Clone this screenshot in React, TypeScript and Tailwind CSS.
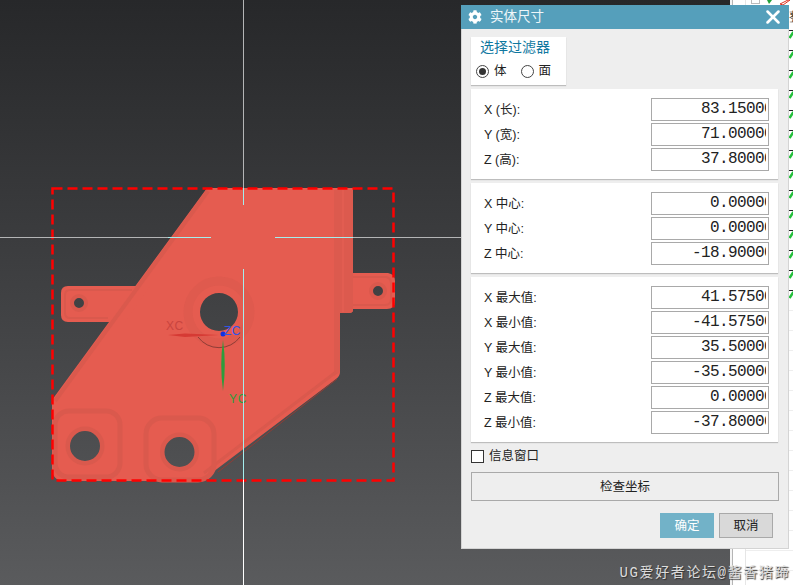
import React from 'react';
import { FaCog } from 'react-icons/fa';
import { X } from 'lucide-react';

const cjk = '"Liberation Sans", "Noto Sans CJK SC", sans-serif';

const hole = (cx: number, cy: number, r: number) =>
  `M${cx - r} ${cy}a${r} ${r} 0 1 0 ${r * 2} 0a${r} ${r} 0 1 0 ${-r * 2} 0Z`;

const outline =
  'M207 188L353 188L353 273L388 273Q395 274 395 281L395 301Q395 309 387 309L353 309L353 310Q353 313 349 313L340 313L340 372Q340 376 336 379L205 478Q203 480 198 481L65 481Q52 481 52 468L52 400Z';
const tab = 'M150 286L68 286Q61 286 61 293L61 315Q61 322 68 322L125 322Z';

const holes = [
  hole(219, 312, 19),
  hole(79, 303, 5),
  hole(378, 291, 5),
  hole(85, 446, 15),
  hole(179.5, 452, 15),
].join('');

const Viewport = () => (
  <svg width="730" height="585" viewBox="0 0 730 585" className="block">
    <defs>
      <mask id="part-holes">
        <rect width="730" height="585" fill="white" />
        <path d={holes} fill="black" />
      </mask>
    </defs>
    <g mask="url(#part-holes)">
      <path d={outline} fill="#e55c50" />
      <path d={tab} fill="#e55c50" />
      <path d="M334 190H353V310Q353 313 349 313H340V372L334 376Z" fill="#dc5a4e" />
      {/* bevels */}
      <g fill="none" stroke="#da594d">
        <path d="M208 191L55 401" strokeWidth="4" />
        <path d="M336 372L204 473" strokeWidth="3" />
        <path d="M343 190L343 312" stroke="#e25d51" strokeWidth="2" />
        <path d="M132 290L70 290Q65 290 65 295L65 313Q65 318 70 318L108 318" strokeWidth="2" />
        <path d="M353 277L386 277Q391 278 391 283L391 299Q391 305 385 305L353 305" strokeWidth="2" />
        <rect x="55" y="411" width="65" height="66" rx="14" strokeWidth="5" />
        <rect x="146" y="418" width="68" height="62" rx="16" strokeWidth="5" />
        <circle cx="219" cy="312" r="31" strokeWidth="9" opacity="0.6" />
        <circle cx="79" cy="303" r="7" strokeWidth="4" />
        <circle cx="378" cy="291" r="7" strokeWidth="4" />
        <circle cx="85" cy="446" r="17" strokeWidth="5" />
        <circle cx="179.5" cy="452" r="17" strokeWidth="5" />
      </g>
      <path d="M198 337A26 26 0 0 0 240 337" fill="none" stroke="#8e3d36" strokeWidth="1" />
      <path d="M218 472L337 379" fill="none" stroke="#8e3d36" strokeWidth="1" />
    </g>

    {/* work coordinate axes */}
    <path d="M168 335L185 333.5L219 335L185 337Z" fill="#d63a34" />
    <path d="M223 340Q226.5 365 223 391Q219.5 365 223 340Z" fill="#2e9c3c" />
    <circle cx="223" cy="334" r="2.5" fill="#1030e0" />
    <text x="166" y="330" fontSize="12" letterSpacing="0.5" fill="#c9453f" fontFamily="Liberation Sans">XC</text>
    <text x="224" y="335" fontSize="12" letterSpacing="0.5" fill="#2f55e8" fontFamily="Liberation Sans">ZC</text>
    <text x="229" y="403" fontSize="12" letterSpacing="0.8" fill="#2e9c3c" fontFamily="Liberation Sans">YC</text>

    {/* selection box */}
    <rect x="52.5" y="188.5" width="341" height="292" fill="none" stroke="#ff0000" strokeWidth="2.5" strokeDasharray="10 5" />

    {/* crosshair */}
    <g strokeWidth="1" fill="none">
      <path d="M243.5 0V188M0 237.5H168M353 237.5H461" stroke="#b4b5b6" />
      <path d="M243.5 188V205M243.5 269V480M168 237.5H211M275 237.5H353" stroke="#a4eeee" />
      <path d="M243.5 480V585" stroke="#ffffff" />
    </g>
  </svg>
);

const Row = ({ label, value }: { label: string; value: string }) => (
  <div className="flex items-center justify-between pl-[13px] pr-[9px] h-[23px]">
    <span className="pt-[2px] text-[12.5px] text-[#222]" style={{ fontFamily: cjk }}>
      {label}
    </span>
    <div className="w-[118px] h-[23px] bg-white border border-[#a9a9a9] pr-[2px]">
      <div className="h-full overflow-hidden text-right leading-[21px] text-[16px] tracking-[-0.6px] text-[#222] font-['Liberation_Mono',monospace]">
        <span className="block -mr-[7px] whitespace-nowrap">{value}</span>
      </div>
    </div>
  </div>
);

const Card = ({ rows }: { rows: [string, string][] }) => (
  <div className="w-[307px] bg-white pt-[9px] pb-[8px] flex flex-col gap-[2px] shadow-[0_1px_1px_#bdbdbd]">
    {rows.map(([label, value]) => (
      <Row key={label} label={label} value={value} />
    ))}
  </div>
);

const Radio = ({ checked, label }: { checked?: boolean; label: string }) => (
  <label className="flex items-center gap-[5px] text-[12.5px] leading-[14px] text-[#222]">
    <span className="w-[13px] h-[13px] rounded-full border border-[#444] bg-white flex items-center justify-center">
      {checked && <span className="w-[7px] h-[7px] rounded-full bg-[#333]" />}
    </span>
    {label}
  </label>
);

const Dialog = () => (
  <div
    className="absolute left-[461px] top-[5px] w-[328px] h-[544px] bg-[#eeeeee] border-x border-b border-[#d4d4d4] flex flex-col"
    style={{ fontFamily: cjk }}>
    <div className="h-[24px] shrink-0 bg-[#559fbb] flex items-center pl-[7px] pr-[5px] -mx-px text-white">
      <FaCog className="w-[14px] h-[14px]" />
      <span className="ml-[8px] text-[13.5px] text-[#eef6f9]">实体尺寸</span>
      <X className="ml-auto w-[22px] h-[22px]" strokeWidth={2.8} />
    </div>
    <div className="flex flex-col flex-1 pl-[9px] pt-[8px]">
      <div className="w-[95px] h-[48px] bg-white shadow-[0_1px_1px_#bdbdbd] flex flex-col">
        <span className="pl-[9px] text-[14px] leading-[20px] text-[#10789f]">选择过滤器</span>
        <div className="flex gap-[14px] pl-[5px] mt-[7px]">
          <Radio checked label="体" />
          <Radio label="面" />
        </div>
      </div>
      <div className="flex flex-col gap-[4px] mt-[4px]">
        <Card
          rows={[
            ['X (长):', '83.15000'],
            ['Y (宽):', '71.00000'],
            ['Z (高):', '37.80000'],
          ]}
        />
        <Card
          rows={[
            ['X 中心:', '0.00000'],
            ['Y 中心:', '0.00000'],
            ['Z 中心:', '-18.90000'],
          ]}
        />
        <Card
          rows={[
            ['X 最大值:', '41.57500'],
            ['X 最小值:', '-41.57500'],
            ['Y 最大值:', '35.50000'],
            ['Y 最小值:', '-35.50000'],
            ['Z 最大值:', '0.00000'],
            ['Z 最小值:', '-37.80000'],
          ]}
        />
      </div>
      <label className="flex items-center gap-[5px] mt-[8px] h-[13px] text-[12.5px] text-[#222]">
        <span className="w-[13px] h-[13px] bg-white border border-[#333]" />
        信息窗口
      </label>
      <button className="w-[308px] h-[29px] mt-[9px] pt-[2px] bg-[#eeeeee] border border-[#a9a9a9] text-[12.5px] text-[#222]">
        检查坐标
      </button>
      <div className="flex gap-[5px] mt-[12px] ml-[189px]">
        <button className="w-[54px] h-[25px] pt-px bg-[#72b2c8] text-white text-[12.5px]">确定</button>
        <button className="w-[54px] h-[25px] pt-px bg-[#d9d9d9] border border-[#a9a9a9] text-[#222] text-[12.5px]">
          取消
        </button>
      </div>
    </div>
  </div>
);

const SideList = () => (
  <div className="relative w-[63px] h-full bg-white border-l-[2px] border-[#f4f4f4] overflow-hidden">
    <div className="absolute left-0 top-0 bottom-0 w-px bg-[#b5b5b5]" />
    <div className="absolute left-[13px] top-0 bottom-0 w-px bg-[#e6e6e6]" />
    <div className="absolute left-[19px] -top-[6px] w-[9px] h-[10px] border border-[#bbb]" />
    <svg className="absolute left-[34px] top-0" width="26" height="5" viewBox="0 0 26 5">
      <path d="M1 0L3 4L6 0" fill="#23a03a" />
      <path d="M14 4L22 0L24 0L17 5Z" fill="none" stroke="#e03020" />
    </svg>
    <span className="absolute left-[57px] top-[7px] text-[13px] text-[#222]">整</span>
    <div className="flex flex-col pt-[30px]">
      {Array.from({ length: 14 }).map((_, i) => (
        <div key={i} className="relative h-[20px] border-t border-[#222] ml-[57px]">
          <svg className="absolute left-0 top-0" width="5" height="9" viewBox="0 0 5 9">
            <path d="M0.5 7L4.5 1" stroke="#22c03a" strokeWidth="2.5" fill="none" />
          </svg>
        </div>
      ))}
      {Array.from({ length: 14 }).map((_, i) => (
        <div key={i} className="h-[20px] border-t border-[#eeeeee] ml-[14px]" />
      ))}
    </div>
  </div>
);

const App: React.FC = () => (
  <div className="relative w-[793px] h-[585px] overflow-hidden flex bg-white">
    <div className="w-[730px] h-full shrink-0 bg-linear-to-b from-[#27282a] to-[#5a5b5d]">
      <Viewport />
    </div>
    <SideList />
    <Dialog />
    <div
      className="absolute right-[3px] bottom-[2px] text-[14px] leading-[20px] tracking-[1.6px] text-[#dcdcdc] [text-shadow:1px_1px_1px_#333]"
      style={{ fontFamily: '"Liberation Mono", "Noto Sans CJK SC", monospace' }}>
      UG爱好者论坛@酱香猪蹄
    </div>
  </div>
);

export default App;
